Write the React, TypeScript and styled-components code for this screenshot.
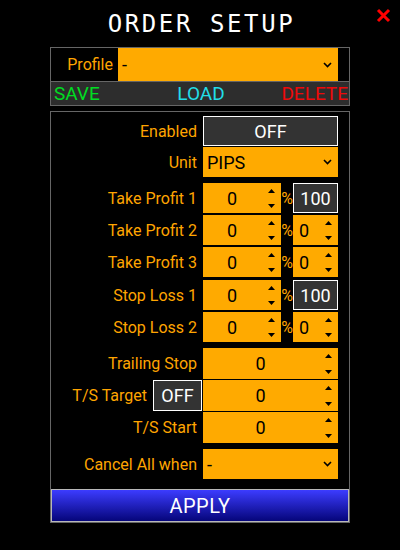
import React from 'react';
import styled, { createGlobalStyle } from 'styled-components';

const ORANGE = '#ffaa00';
const LABEL = '#ffa500';

const GlobalStyle = createGlobalStyle`
  html, body {
    margin: 0;
    padding: 0;
    background: #000;
  }
  body {
    font-family: Roboto, "Liberation Sans", sans-serif;
  }
`;

const Window = styled.div`
  position: relative;
  width: 400px;
  height: 550px;
  background: #000;
  overflow: hidden;
`;

const TitleBar = styled.div`
  height: 47px;
  display: flex;
  align-items: center;
  justify-content: center;
`;

const Title = styled.h1`
  margin: 0;
  padding-left: 3px;
  font-family: "DejaVu Sans Mono", "Liberation Mono", monospace;
  font-weight: normal;
  font-size: 24px;
  letter-spacing: 2.6px;
  color: #fff;
`;

const CloseButton = styled.button`
  position: absolute;
  top: 8px;
  right: 9px;
  width: 15px;
  height: 15px;
  padding: 0;
  border: 0;
  background: none;
  cursor: pointer;
`;

const Panel = styled.div<{ $mt?: number }>`
  margin: ${p => p.$mt ?? 0}px 50px 0;
  border: 1px solid #666;
`;

const ProfileRow = styled.div`
  height: 33px;
  display: flex;
  align-items: center;
`;

const Label = styled.div<{ $w: number; $pr?: number }>`
  width: ${p => p.$w}px;
  flex: none;
  box-sizing: border-box;
  padding-right: ${p => p.$pr ?? 6}px;
  display: flex;
  align-items: center;
  justify-content: flex-end;
  gap: 6px;
  color: ${LABEL};
  font-size: 16px;
  white-space: nowrap;
`;

const SelectBox = styled.div<{ $w: number }>`
  width: ${p => p.$w}px;
  height: 100%;
  box-sizing: border-box;
  background: ${ORANGE};
  display: flex;
  align-items: center;
  justify-content: space-between;
  padding: 0 6px 0 4px;
  color: #000;
  font-size: 18px;
`;

const ActionBar = styled.div`
  height: 23px;
  border-top: 1px solid #666;
  background: #2d2d2d;
  display: grid;
  grid-template-columns: 1fr auto 1fr;
  align-items: center;
  padding: 0 1px 0 3px;
`;

const ActionButton = styled.span<{ $color: string; $align: string }>`
  color: ${p => p.$color};
  justify-self: ${p => p.$align};
  font-size: 19px;
  line-height: 23px;
  cursor: pointer;
`;

const Form = styled.div`
  padding-top: 4px;
`;

const Row = styled.div<{ $mt?: number; $h?: number }>`
  margin-top: ${p => p.$mt ?? 0}px;
  height: ${p => p.$h ?? 30}px;
  display: flex;
  align-items: stretch;
`;

const Toggle = styled.div<{ $w: number }>`
  width: ${p => p.$w}px;
  height: 100%;
  box-sizing: border-box;
  border: 1px solid #fff;
  background: #333;
  color: #fff;
  font-size: 18px;
  display: flex;
  align-items: center;
  justify-content: center;
`;

const SpinBox = styled.div<{ $w: number }>`
  width: ${p => p.$w}px;
  height: 100%;
  box-sizing: border-box;
  background: ${ORANGE};
  display: flex;
  align-items: stretch;
  color: #000;
  font-size: 18px;
`;

const SpinValue = styled.div<{ $left?: boolean }>`
  flex: 1;
  display: flex;
  align-items: center;
  justify-content: ${p => (p.$left ? 'flex-start' : 'center')};
  padding-left: ${p => (p.$left ? 6 : 0)}px;
`;

const SpinArrows = styled.div`
  width: 20px;
  display: flex;
  flex-direction: column;
  align-items: center;
  justify-content: space-between;
  padding: 6px 0 5px;
  box-sizing: border-box;
`;

const Percent = styled.div`
  width: 12px;
  display: flex;
  align-items: center;
  justify-content: center;
  color: ${LABEL};
  font-size: 16px;
`;

const ApplyButton = styled.button`
  display: block;
  width: 100%;
  height: 33px;
  margin-top: 10px;
  box-sizing: border-box;
  border: 1px solid #b8b8b8;
  background: linear-gradient(#3c3cff, #05057a);
  color: #fff;
  font-family: Roboto, "Liberation Sans", sans-serif;
  font-size: 20px;
  letter-spacing: 0.5px;
  cursor: pointer;
`;

const Chevron = () => (
  <svg width="9" height="6" viewBox="0 0 9 6">
    <path d="M1 1 L4.5 4.5 L8 1" fill="none" stroke="#000" strokeWidth="1.6" />
  </svg>
);

const Arrows = () => (
  <SpinArrows>
    <svg width="7" height="6" viewBox="0 0 7 6">
      <path d="M3.5 0 L7 4 L0 4 Z" fill="#000" />
    </svg>
    <svg width="7" height="6" viewBox="0 0 7 6">
      <path d="M0 2 L7 2 L3.5 6 Z" fill="#000" />
    </svg>
  </SpinArrows>
);

const Spinner: React.FC<{ w: number; value: string; left?: boolean }> = ({ w, value, left }) => (
  <SpinBox $w={w}>
    <SpinValue $left={left}>{value}</SpinValue>
    <Arrows />
  </SpinBox>
);

const Select: React.FC<{ w: number; value: string }> = ({ w, value }) => (
  <SelectBox $w={w}>
    <span>{value}</span>
    <Chevron />
  </SelectBox>
);

const LABEL_W = 152;
const CTRL_W = 135;

type Split = { label: string; mt: number; second: string; boxed?: boolean };

const splits: Split[] = [
  { label: 'Take Profit 1', mt: 6, second: '100', boxed: true },
  { label: 'Take Profit 2', mt: 2, second: '0' },
  { label: 'Take Profit 3', mt: 2, second: '0' },
  { label: 'Stop Loss 1', mt: 3, second: '100', boxed: true },
  { label: 'Stop Loss 2', mt: 2, second: '0' },
];

const App: React.FC = () => (
  <Window>
    <GlobalStyle />
    <TitleBar>
      <Title>ORDER SETUP</Title>
    </TitleBar>
    <CloseButton aria-label="close">
      <svg width="15" height="15" viewBox="0 0 15 15">
        <path d="M2 2 L13 13 M13 2 L2 13" stroke="#ff0000" strokeWidth="3" />
      </svg>
    </CloseButton>

    <Panel>
      <ProfileRow>
        <Label $w={67} $pr={5}>Profile</Label>
        <Select w={220} value="-" />
      </ProfileRow>
      <ActionBar>
        <ActionButton $color="#00dd22" $align="start">SAVE</ActionButton>
        <ActionButton $color="#22dde8" $align="center">LOAD</ActionButton>
        <ActionButton $color="#ee0a0a" $align="end">DELETE</ActionButton>
      </ActionBar>
    </Panel>

    <Panel $mt={5}>
      <Form>
        <Row>
          <Label $w={LABEL_W}>Enabled</Label>
          <Toggle $w={CTRL_W}>OFF</Toggle>
        </Row>
        <Row $mt={1}>
          <Label $w={LABEL_W}>Unit</Label>
          <Select w={CTRL_W} value="PIPS" />
        </Row>
        {splits.map(s => (
          <Row key={s.label} $mt={s.mt}>
            <Label $w={LABEL_W}>{s.label}</Label>
            <Spinner w={78} value="0" />
            <Percent>%</Percent>
            {s.boxed ? (
              <Toggle $w={45}>{s.second}</Toggle>
            ) : (
              <Spinner w={45} value={s.second} left />
            )}
          </Row>
        ))}
        <Row $mt={6} $h={31}>
          <Label $w={LABEL_W}>Trailing Stop</Label>
          <Spinner w={CTRL_W} value="0" />
        </Row>
        <Row $mt={1} $h={31}>
          <Label $w={LABEL_W} $pr={1}>
            T/S Target
            <Toggle $w={49}>OFF</Toggle>
          </Label>
          <Spinner w={CTRL_W} value="0" />
        </Row>
        <Row $mt={1} $h={31}>
          <Label $w={LABEL_W}>T/S Start</Label>
          <Spinner w={CTRL_W} value="0" />
        </Row>
        <Row $mt={6}>
          <Label $w={LABEL_W}>Cancel All when</Label>
          <Select w={CTRL_W} value="-" />
        </Row>
      </Form>
      <ApplyButton>APPLY</ApplyButton>
    </Panel>
  </Window>
);

export default App;
